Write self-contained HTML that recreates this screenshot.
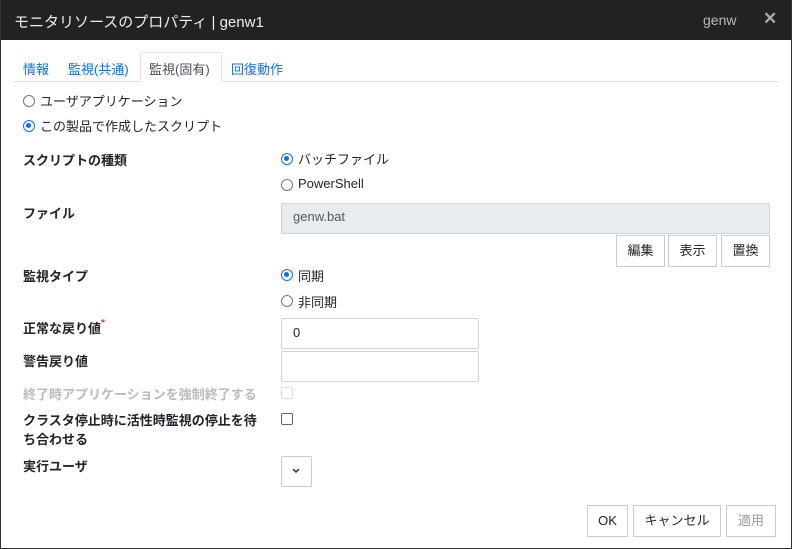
<!DOCTYPE html>
<html><head><meta charset="utf-8"><style>
*{box-sizing:border-box;margin:0;padding:0}
body{width:792px;height:549px;background:#fff;font-family:"Liberation Sans","Noto Sans CJK JP",sans-serif;font-size:13px;color:#212529;position:relative;overflow:hidden}
.frame{position:absolute;left:0;top:0;width:792px;height:549px;border:1px solid #333;border-top:none}
.title{position:absolute;left:0;top:0;width:792px;height:40px;background:#222;color:#eee;font-size:15px}
.a{position:absolute;white-space:nowrap}
.b{font-weight:bold}
.radio{position:absolute;width:12px;height:12px;border:1px solid #777;border-radius:50%;background:#fff}
.radio.on{border:1.5px solid #0d6efd}
.radio.on::after{content:"";position:absolute;left:2px;top:2px;width:5px;height:5px;border-radius:50%;background:#0d6efd}
.inp{position:absolute;border:1px solid #ced4da;background:#fff;border-radius:2px}
.btn{position:absolute;border:1px solid #ccc;background:#fff;text-align:center;line-height:29px;font-size:13px}
.cb{position:absolute;width:12px;height:12px;border:1.5px solid #666;border-radius:2px}
</style></head><body>
<div class="title"><span class="a" style="left:14px;top:11px">モニタリソースのプロパティ | genw1</span><span class="a" style="left:703px;top:12px;color:#bbb;font-size:14px">genw</span><span class="a" style="left:763px;top:9px;color:#aaa;font-size:17px;font-weight:bold">✕</span></div>
<div class="frame"></div>
<div class="a" style="left:13px;top:81px;width:766px;height:1px;background:#dee2e6"></div>
<div class="a" style="left:140px;top:52px;width:82px;height:30px;border:1px solid #dee2e6;border-bottom:1px solid #fff;background:#fff;border-radius:3px 3px 0 0"></div>
<span class="a" style="left:23px;top:59px;color:#0d6efd">情報</span>
<span class="a" style="left:68px;top:59px;color:#0d6efd">監視(共通)</span>
<span class="a" style="left:149px;top:59px;color:#495057">監視(固有)</span>
<span class="a" style="left:231px;top:59px;color:#0d6efd">回復動作</span>
<div class="radio" style="left:23px;top:95px"></div><span class="a" style="left:40px;top:91px">ユーザアプリケーション</span>
<div class="radio on" style="left:23px;top:120px"></div><span class="a" style="left:40px;top:116px">この製品で作成したスクリプト</span>
<span class="a b" style="left:23px;top:150px">スクリプトの種類</span>
<div class="radio on" style="left:281px;top:153px"></div><span class="a" style="left:298px;top:149px">バッチファイル</span>
<div class="radio" style="left:281px;top:179px"></div><span class="a" style="left:298px;top:176px">PowerShell</span>
<span class="a b" style="left:23px;top:203px">ファイル</span>
<div class="inp" style="left:281px;top:203px;width:489px;height:31px;background:#e9ecef"></div><span class="a" style="left:293px;top:209px;color:#555">genw.bat</span>
<div class="btn" style="left:616px;top:235px;width:49px;height:32px">編集</div>
<div class="btn" style="left:668px;top:235px;width:49px;height:32px">表示</div>
<div class="btn" style="left:721px;top:235px;width:49px;height:32px">置換</div>
<span class="a b" style="left:23px;top:266px">監視タイプ</span>
<div class="radio on" style="left:281px;top:269px"></div><span class="a" style="left:298px;top:266px">同期</span>
<div class="radio" style="left:281px;top:295px"></div><span class="a" style="left:298px;top:292px">非同期</span>
<span class="a b" style="left:23px;top:318px">正常な戻り値<span style="color:#dc3545;font-size:10px;vertical-align:top">*</span></span>
<div class="inp" style="left:281px;top:318px;width:198px;height:31px"></div><span class="a" style="left:293px;top:325px">0</span>
<span class="a b" style="left:23px;top:351px">警告戻り値</span>
<div class="inp" style="left:281px;top:351px;width:198px;height:31px"></div>
<span class="a b" style="left:23px;top:384px;color:#bbb">終了時アプリケーションを強制終了する</span>
<div class="cb" style="left:281px;top:387px;border:1px solid #ddd"></div>
<span class="a b" style="left:23px;top:411px;line-height:19px">クラスタ停止時に活性時監視の停止を待<br>ち合わせる</span>
<div class="cb" style="left:281px;top:413px"></div>
<span class="a b" style="left:23px;top:456px">実行ユーザ</span>
<div class="inp" style="left:281px;top:456px;width:31px;height:31px;border-color:#ccc"></div>
<svg class="a" style="left:292px;top:468px" width="8" height="6"><path d="M1 1L4 4L7 1" stroke="#333" stroke-width="1.5" fill="none"/></svg>
<div class="btn" style="left:587px;top:505px;width:41px;height:32px">OK</div>
<div class="btn" style="left:633px;top:505px;width:88px;height:32px">キャンセル</div>
<div class="btn" style="left:726px;top:505px;width:50px;height:32px;color:#999">適用</div>
</body></html>
